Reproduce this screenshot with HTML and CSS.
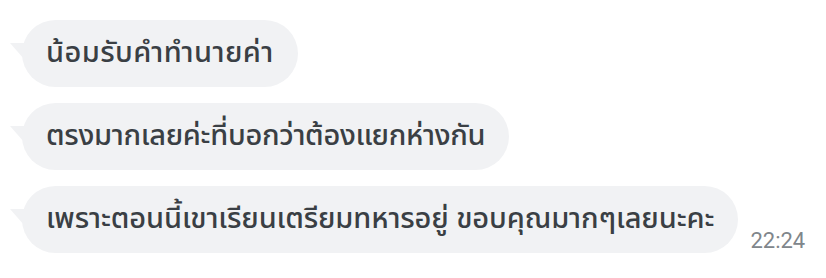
FILE: index.html
```html
<!DOCTYPE html>
<html lang="th">
<head>
<meta charset="utf-8">
<link rel="stylesheet" href="styles.css">
</head>
<body>
<div class="chat">
  <div class="row">
    <div class="bubble wide">น้อมรับคำทำนายค่า</div>
  </div>
  <div class="row">
    <div class="bubble tight">ตรงมากเลยค่ะที่บอกว่าต้องแยกห่างกัน</div>
  </div>
  <div class="row">
    <div class="bubble snug">เพราะตอนนี้เขาเรียนเตรียมทหารอยู่ ขอบคุณมากๆเลยนะคะ</div>
    <div class="time">22:24</div>
  </div>
</div>
</body>
</html>
```
FILE: styles.css
```css
html, body {
  margin: 0;
  padding: 0;
  background: #ffffff;
}
.chat {
  display: flex;
  flex-direction: column;
  gap: 16px;
  padding: 20px 0 0 22px;
}
.row {
  display: flex;
  align-items: flex-end;
  gap: 12px;
}
.bubble {
  position: relative;
  background: #f1f2f4;
  color: #3a3f44;
  font-family: "Noto Sans Thai", "Noto Sans", "DejaVu Sans", sans-serif;
  font-size: 29px;
  font-weight: 500;
  line-height: 67px;
  height: 67px;
  padding: 0 24px;
  border-radius: 34px;
  white-space: nowrap;
}
.bubble.wide { letter-spacing: 0.4px; }
.bubble.tight { letter-spacing: -0.3px; }
.bubble.snug { letter-spacing: -0.1px; }
.bubble::before {
  content: "";
  position: absolute;
  left: -12px;
  top: 23px;
  width: 20px;
  height: 16px;
  background: #f1f2f4;
  clip-path: polygon(0 0, 100% 0, 100% 100%, 70% 100%);
}
.time {
  font-family: Roboto, "Liberation Sans", sans-serif;
  font-size: 22px;
  color: #80868b;
  padding-bottom: 0;
}
```
